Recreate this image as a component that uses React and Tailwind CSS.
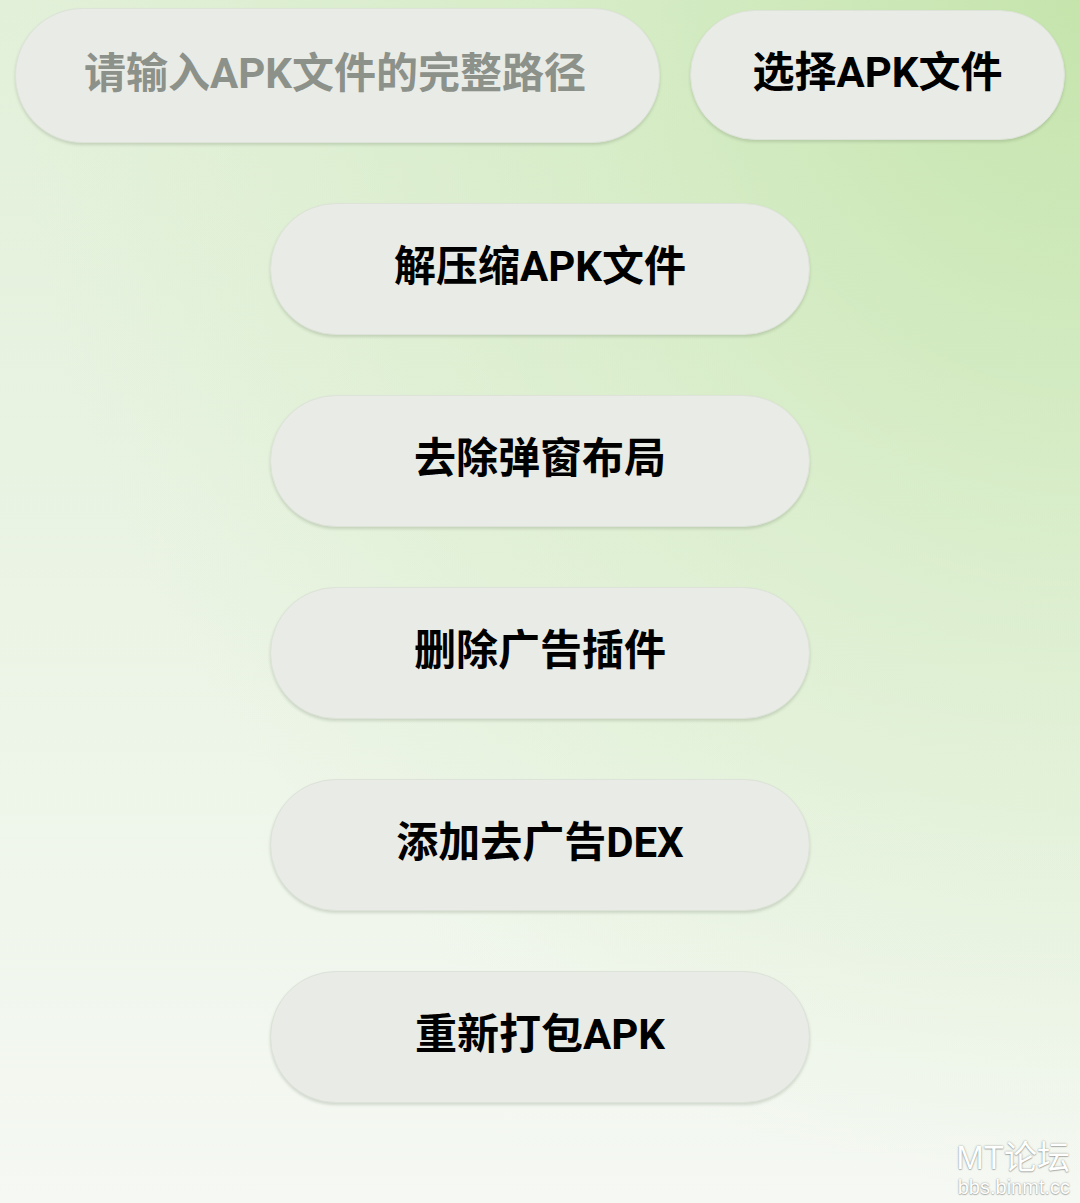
import React from 'react';

const actions = ['解压缩APK文件', '去除弹窗布局', '删除广告插件', '添加去广告DEX', '重新打包APK'];

const font = { fontFamily: 'Roboto, "Noto Sans CJK SC", sans-serif' };

const pill =
	'rounded-full bg-[#e9ebe6] border border-[#dde3d8] shadow-[0_2px_3px_rgba(60,80,50,0.18)] flex items-center justify-center pb-[4px]';

export default function App() {
	return (
		<div
			className="w-full h-[1203px] relative overflow-hidden bg-[radial-gradient(ellipse_at_100%_0%,rgba(196,228,170,0.95)_0%,rgba(205,233,185,0.5)_35%,rgba(220,240,205,0)_70%),linear-gradient(to_bottom,#e2f0d9_0%,#ebf4e5_50%,#f5f8f3_100%)]"
			style={font}
		>
			<div className="flex items-start pt-[8px] pl-[15px] gap-[30px]">
				<div className={`${pill} w-[645px] h-[135px] !justify-start pl-[68px]`}>
					<span className="text-[42px] font-bold text-[#8c918a] leading-none">请输入APK文件的完整路径</span>
				</div>
				<button className={`${pill} w-[375px] h-[130px] mt-[2px]`}>
					<span className="text-[42px] font-bold text-black leading-none">选择APK文件</span>
				</button>
			</div>

			<div className="flex flex-col items-center gap-[60px] mt-[60px]">
				{actions.map((label) => (
					<button key={label} className={`${pill} w-[540px] h-[132px]`}>
						<span className="text-[42px] font-bold text-black leading-none">{label}</span>
					</button>
				))}
			</div>

			<div className="absolute right-[10px] bottom-[6px] flex flex-col items-end text-white leading-none [text-shadow:0_0_2px_rgba(0,0,0,0.4),0_1px_1px_rgba(0,0,0,0.2)]">
				<span className="text-[33px]" style={{ fontFamily: '"Liberation Sans", "Noto Sans CJK SC", sans-serif' }}>MT论坛</span>
				<span className="text-[20px] mt-[3px]" style={{ fontFamily: '"Liberation Sans", sans-serif' }}>bbs.binmt.cc</span>
			</div>
		</div>
	);
}
